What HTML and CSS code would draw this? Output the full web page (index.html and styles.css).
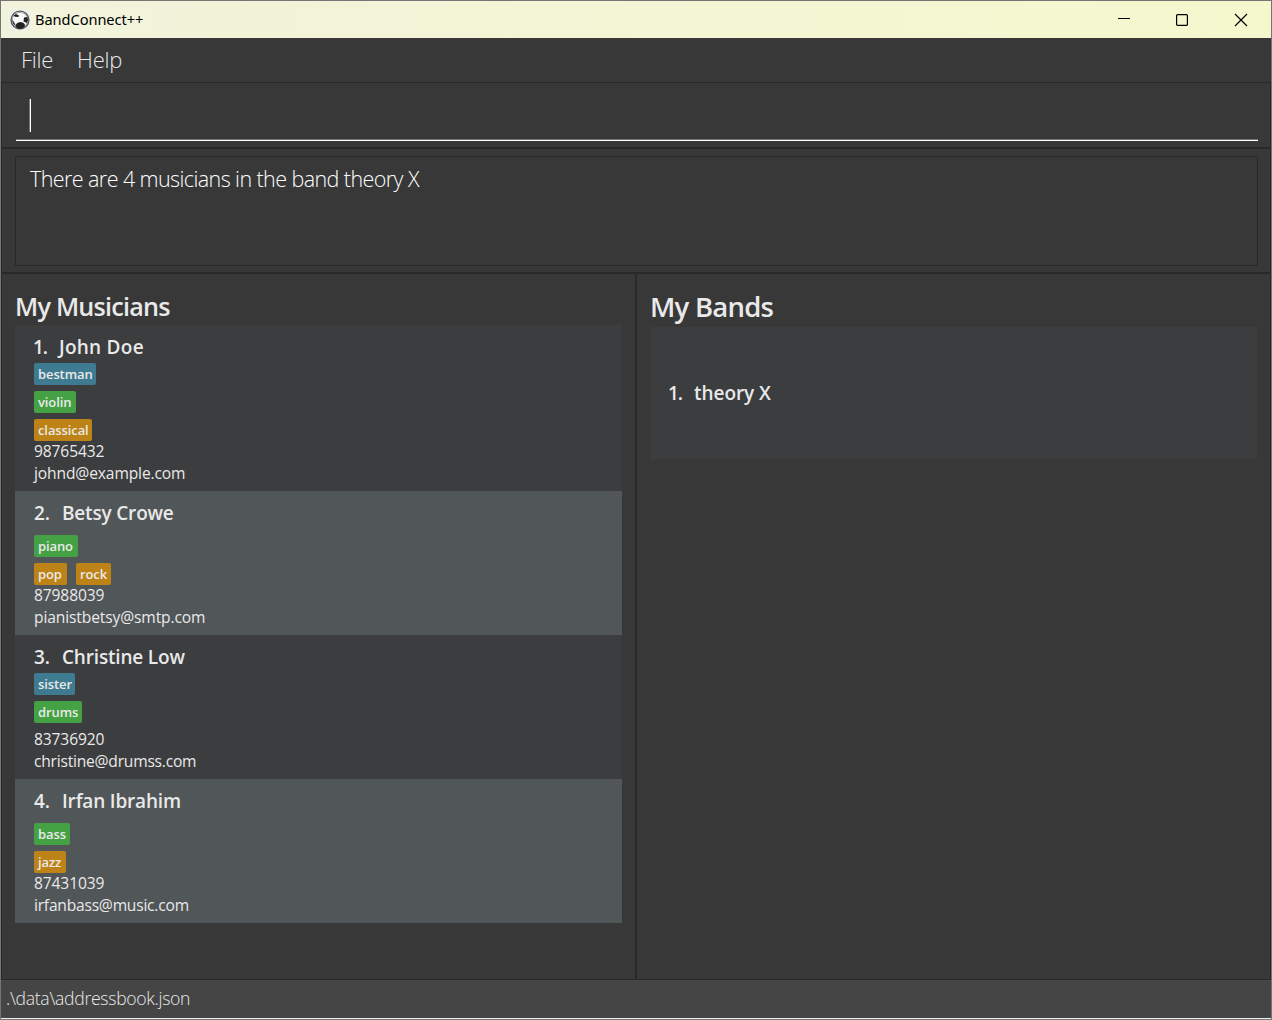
FILE: index.html
```html
<!DOCTYPE html>
<html lang="en">
<head>
<meta charset="utf-8">
<title>BandConnect++</title>
<link rel="stylesheet" href="styles.css">
</head>
<body>
<div class="window">
  <header class="titlebar">
    <svg class="logo" width="20" height="20" viewBox="0 0 20 20">
      <rect width="20" height="20" fill="#eee"/>
      <circle cx="10" cy="10" r="8.900" fill="#f8f8f8" stroke="#555" stroke-width="1.400"/>
      <circle cx="10" cy="10" r="7.600" fill="none" stroke="#999" stroke-width=".8"/>
      <path d="M3.500 5.500 L6 4 L9 5.500 L8.500 7 L5 6.800Z M14 7.500 L17.500 7 L18 10 L17 13 L13.500 11.500Z M2 10 L4 12 L6 16 L3.500 14Z" fill="#222"/>
      <path d="M5.500 16 Q6 12.500 10.500 12 Q15 12.500 15 16 Q13 19 10 19 Q7 19 5.500 16Z" fill="#222"/>
    </svg>
    <span class="app-name">BandConnect++</span>
    <div class="controls">
      <svg width="14" height="14" viewBox="0 0 14 14"><path d="M2 5.500H14" stroke="#000"/></svg>
      <svg width="14" height="14" viewBox="0 0 14 14"><rect x="1.600" y="1.600" width="10.800" height="10.800" rx="1" fill="none" stroke="#000" stroke-width="1.200"/></svg>
      <svg width="14" height="14" viewBox="0 0 14 14"><path d="M1 1L13 13M13 1L1 13" stroke="#000" stroke-width="1.200"/></svg>
    </div>
  </header>
  <nav class="menubar"><span class="menu-file">File</span><span class="menu-help">Help</span></nav>
  <section class="command"><div class="field"><i class="caret"></i></div></section>
  <section class="result"><div class="result-box"><span class="message">There are 4 musicians in the band theory X</span></div></section>
  <main class="split">
    <section class="pane musicians">
      <h1 class="heading"><span>My Musicians</span></h1>
      <article class="card">
        <h2 class="name"><span class="index one">1.</span><span class="n1">John Doe</span></h2>
        <div class="tags">
          <div class="row"><span class="tag friend w-bestman">bestman</span></div>
          <div class="row"><span class="tag instrument w-violin">violin</span></div>
          <div class="row"><span class="tag genre w-classical">classical</span></div>
        </div>
        <p class="detail phone">98765432</p>
        <p class="detail e1">johnd@example.com</p>
      </article>
      <article class="card alt">
        <h2 class="name"><span class="index">2.</span><span>Betsy Crowe</span></h2>
        <div class="tags">
          <div class="row"></div>
          <div class="row"><span class="tag instrument w-piano">piano</span></div>
          <div class="row"><span class="tag genre w-pop">pop</span><span class="tag genre w-rock">rock</span></div>
        </div>
        <p class="detail phone">87988039</p>
        <p class="detail e2">pianistbetsy@smtp.com</p>
      </article>
      <article class="card">
        <h2 class="name"><span class="index">3.</span><span>Christine Low</span></h2>
        <div class="tags">
          <div class="row"><span class="tag friend w-sister">sister</span></div>
          <div class="row"><span class="tag instrument w-drums">drums</span></div>
          <div class="row"></div>
        </div>
        <p class="detail phone">83736920</p>
        <p class="detail e3">christine@drumss.com</p>
      </article>
      <article class="card alt">
        <h2 class="name"><span class="index">4.</span><span>Irfan Ibrahim</span></h2>
        <div class="tags">
          <div class="row"></div>
          <div class="row"><span class="tag instrument w-bass">bass</span></div>
          <div class="row"><span class="tag genre w-jazz">jazz</span></div>
        </div>
        <p class="detail phone">87431039</p>
        <p class="detail e4">irfanbass@music.com</p>
      </article>
    </section>
    <section class="pane bands">
      <h1 class="heading large"><span>My Bands</span></h1>
      <article class="card band"><h2 class="name"><span class="index one">1.</span><span class="n5">theory X</span></h2></article>
    </section>
  </main>
  <footer class="status"><span class="path">.\data\addressbook.json</span></footer>
</div>
</body>
</html>
```
FILE: styles.css
```css
* { box-sizing: border-box; }
body { margin: 0; font-family: "Open Sans", "Noto Sans", sans-serif; color: #e9e9e9; background: #383838; }
h1, h2, p { margin: 0; font-weight: 600; white-space: nowrap; }
span { white-space: nowrap; }
.window { width: 1272px; height: 1020px; display: flex; flex-direction: column; background: #383838; border: 1px solid #757575; overflow: hidden; }
.titlebar { height: 37px; flex: none; display: flex; align-items: center; padding: 0 23px 0 9px; background: linear-gradient(90deg, #f1f3dc, #f5f8cd); color: #000; }
.app-name { margin-left: 5px; padding-bottom: 1px; font: 14.6px/20px "Noto Sans", sans-serif; letter-spacing: -.05px; }
.controls { margin-left: auto; display: flex; gap: 45px; }
.controls svg { display: block; }
.menubar { height: 44px; flex: none; padding-left: 20px; display: flex; gap: 24px; font-size: 22px; line-height: 42px; font-weight: 300; letter-spacing: -.25px; }
.command { height: 67px; flex: none; padding: 13px 12px 0 14px; border: 1px solid #292929; border-bottom-width: 2px; }
.field { height: 45px; border-bottom: 1px solid #fff; box-shadow: inset 0 -1px #777; padding: 3px 0 0 13px; }
.caret { display: block; width: 2px; height: 33px; background: linear-gradient(90deg, #777 50%, #fff 50%); }
.result { height: 125px; flex: none; padding: 7px 12px 7px 13px; border: 1px solid #292929; border-width: 0 1px 2px; }
.result-box { height: 110px; border: 1px solid #292929; padding: 8px 14px; font-size: 21.500px; line-height: 28px; font-weight: 300; letter-spacing: -.58px; color: #fff; }
.split { height: 706px; flex: none; display: grid; grid-template-columns: 635px 1fr; border: 1px solid #292929; border-top: 0; }
.pane { padding: 14px 13px 0; }
.musicians { border-right: 2px solid #292929; }
.heading { height: 37px; font-size: 25.200px; line-height: 36px; letter-spacing: -.78px; }
.heading.large { height: 39px; font-size: 27.500px; line-height: 38px; letter-spacing: -.75px; }
.card { background: #3c3d3f; padding: 6px 0 6px 19px; }
.card.alt { background: #515658; }
.name { display: flex; height: 32px; font-size: 19px; line-height: 32px; letter-spacing: -.18px; }
.index { width: 28px; }
.index.one { width: 26px; margin-left: -1px; letter-spacing: -1.200px; }
.n1 { letter-spacing: .25px; }
.n5 { letter-spacing: -.05px; }
.tags { display: flex; flex-direction: column; gap: 6px; }
.row { display: flex; gap: 9px; }
.tag { height: 22px; padding: 0 4px; border-radius: 2px; font-size: 13px; line-height: 22px; font-weight: 600; letter-spacing: -.1px; }
.friend { background: #3e7b91; }
.instrument { background: #44a244; }
.genre { background: #bd8317; }
.detail { height: 22px; font-size: 15.600px; line-height: 20px; font-weight: 400; letter-spacing: -.13px; }
.e3, .e4 { letter-spacing: -.22px; }
.band { height: 132px; display: flex; align-items: center; }
.status { height: 39px; flex: none; padding-left: 5px; background: #454545; border-bottom: 1px solid #eee; font-size: 17.600px; line-height: 37px; font-weight: 300; letter-spacing: -.3px; }
.w-bestman { width: 62px; }
.w-violin { width: 42px; }
.w-classical { width: 58px; }
.w-piano { width: 44px; }
.w-pop { width: 33px; }
.w-rock { width: 35px; }
.w-sister { width: 41px; }
.w-drums { width: 48px; }
.w-bass { width: 36px; }
.w-jazz { width: 32px; }
```
